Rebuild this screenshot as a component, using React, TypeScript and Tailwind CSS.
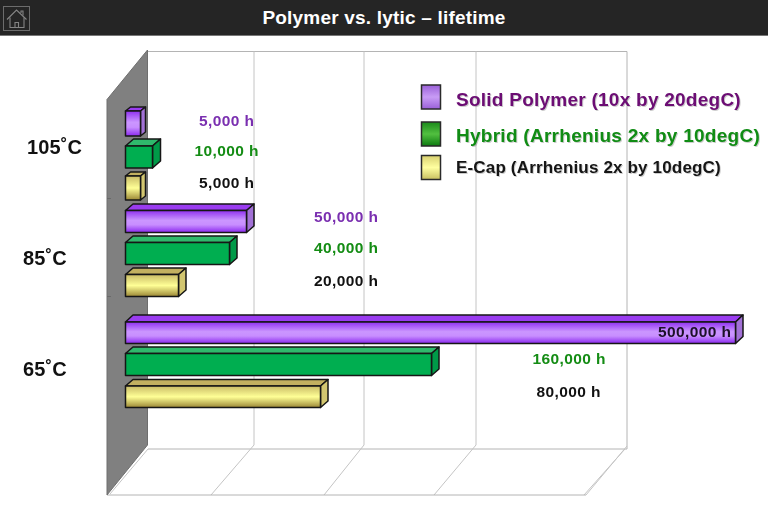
const sans = { fontFamily: '"Liberation Sans", Arial, sans-serif' };

type Bar = { x: number; y: number; w: number; h: number; dx: number; dy: number; c: "p" | "g" | "y" };

const bars: Bar[] = [
  { x: 125.5, y: 111, w: 15, h: 25, dx: 5, dy: -4, c: "p" },
  { x: 125.5, y: 146, w: 27, h: 22, dx: 8, dy: -7, c: "g" },
  { x: 125.5, y: 176, w: 15, h: 24, dx: 5, dy: -4, c: "y" },
  { x: 125.5, y: 210.5, w: 121, h: 22, dx: 7.5, dy: -6.5, c: "p" },
  { x: 125.5, y: 242.5, w: 104, h: 22, dx: 7.5, dy: -6.5, c: "g" },
  { x: 125.5, y: 274.5, w: 53, h: 22, dx: 7.5, dy: -6.5, c: "y" },
  { x: 125.5, y: 322, w: 610, h: 21.5, dx: 7.5, dy: -7, c: "p" },
  { x: 125.5, y: 353.5, w: 306, h: 22, dx: 7.5, dy: -6.5, c: "g" },
  { x: 125.5, y: 386, w: 195, h: 21.5, dx: 7.5, dy: -6.5, c: "y" },
];

const top = { p: "#9a3cf0", g: "#2fb96c", y: "#c2b060" };
const side = { p: "#a271d6", g: "#009a48", y: "#d2c670" };
const front = { p: "url(#purple)", g: "#00ae50", y: "url(#yellow)" };

const labels = [
  { t: "5,000 h", x: 199, y: 126, f: "#7a2fb0" },
  { t: "10,000 h", x: 194.5, y: 156, f: "#148c14" },
  { t: "5,000 h", x: 199, y: 188, f: "#111" },
  { t: "50,000 h", x: 314, y: 222, f: "#7a2fb0" },
  { t: "40,000 h", x: 314, y: 252.5, f: "#148c14" },
  { t: "20,000 h", x: 314, y: 285.5, f: "#111" },
  { t: "500,000 h", x: 658, y: 337, f: "#1c1028" },
  { t: "160,000 h", x: 532.5, y: 363.5, f: "#148c14" },
  { t: "80,000 h", x: 536.5, y: 396.5, f: "#111" },
];

function Bar3D({ b }: { b: Bar }) {
  const { x, y, w, h, dx, dy, c } = b;
  const r = x + w;
  const bot = y + h;
  return (
    <g stroke="#161616" strokeWidth="1.5" strokeLinejoin="round">
      <polygon fill={top[c]} points={`${x},${y} ${x + dx},${y + dy} ${r + dx},${y + dy} ${r},${y}`} />
      <polygon fill={side[c]} points={`${r},${y} ${r + dx},${y + dy} ${r + dx},${bot + dy} ${r},${bot}`} />
      <rect x={x} y={y} width={w} height={h} fill={front[c]} />
    </g>
  );
}

export default function App() {
  return (
    <div className="flex flex-col w-[768px] h-[506px] bg-white overflow-hidden" style={sans}>
      <header className="relative flex items-center justify-center h-[36px] shrink-0 bg-[#252525] border-b border-[#777]">
        <div className="absolute left-[3px] top-[6px] w-[27px] h-[25px] border border-[#6c6c6c]">
          <svg className="block" width="25" height="23" viewBox="0 0 25 23" fill="none" stroke="#858585" strokeWidth="1.1">
            <path d="M3 12.5 L12.5 3 L22.5 12.5" />
            <path d="M6 10.5 V20.5 H20 V10.5" />
            <path d="M11 20.5 V15.5 H14.5 V20.5" />
            <path d="M17 6 V4 H19 V8.5" />
          </svg>
        </div>
        <h1 className="text-[19px] font-bold text-white tracking-[0.2px] leading-none">Polymer vs. lytic – lifetime</h1>
      </header>
      <svg className="block blur-[0.35px]" width="768" height="470" viewBox="0 36 768 470">
        <defs>
          <linearGradient id="purple" x1="0" y1="0" x2="0" y2="1">
            <stop offset="0" stopColor="#9030f0" />
            <stop offset="0.45" stopColor="#cb96ff" />
            <stop offset="0.65" stopColor="#c88eff" />
            <stop offset="1" stopColor="#8a28ee" />
          </linearGradient>
          <linearGradient id="yellow" x1="0" y1="0" x2="0" y2="1">
            <stop offset="0" stopColor="#c9bb66" />
            <stop offset="0.5" stopColor="#ffff96" />
            <stop offset="1" stopColor="#9b8735" />
          </linearGradient>
          <linearGradient id="lgreen" x1="0" y1="0" x2="0" y2="1">
            <stop offset="0" stopColor="#1a8a1a" />
            <stop offset="0.5" stopColor="#52c040" />
            <stop offset="1" stopColor="#0c7a10" />
          </linearGradient>
          <linearGradient id="lpurple" x1="0" y1="0" x2="0" y2="1">
            <stop offset="0" stopColor="#9a60d8" />
            <stop offset="0.5" stopColor="#c89cf5" />
            <stop offset="1" stopColor="#9a60d8" />
          </linearGradient>
          <linearGradient id="lyellow" x1="0" y1="0" x2="0" y2="1">
            <stop offset="0" stopColor="#d8d070" />
            <stop offset="0.5" stopColor="#ffffa0" />
            <stop offset="1" stopColor="#c8c060" />
          </linearGradient>
        </defs>

        {/* back wall, floor */}
        <g fill="none" stroke="#c4c4c4" strokeWidth="1">
          <path d="M148 51.5 H627 V449 H148" stroke="#b4b4b4" />
          <path d="M254 51.5 V445 L211 495" />
          <path d="M364 51.5 V445 L324 495" />
          <path d="M476 51.5 V445 L434 495" />
          <path d="M627 446 L586 495" />
          <path d="M625 449 L584 495" />
          <path d="M107 495 H586" stroke="#b4b4b4" />
          <path d="M148 449 L110 494" />
        </g>
        {/* left wall */}
        <polygon points="107,99.5 147.5,50 147.5,445 107,495" fill="#808080" stroke="#6e6e6e" strokeWidth="1" />
        <path d="M107 198.5 H111 M107 296.5 H111" stroke="#6a6a6a" strokeWidth="1" />

        {bars.map((b, i) => (
          <Bar3D key={i} b={b} />
        ))}

        {/* category labels */}
        <g fontWeight="700" fontSize="20" fill="#111" letterSpacing="0.1">
          <text x="27" y="153.5">105˚C</text>
          <text x="23" y="265">85˚C</text>
          <text x="23" y="376">65˚C</text>
        </g>

        {/* value labels */}
        <g fontWeight="700" fontSize="15.5" letterSpacing="0.4">
          {labels.map((l, i) => (
            <text key={i} x={l.x} y={l.y} fill={l.f}>
              {l.t}
            </text>
          ))}
        </g>

        {/* legend */}
        <g stroke="#2a2a2a" strokeWidth="1.5">
          <rect x="421.5" y="85" width="19" height="24" fill="url(#lpurple)" />
          <rect x="421.5" y="122" width="19" height="24" fill="url(#lgreen)" />
          <rect x="421.5" y="155.5" width="19" height="24" fill="url(#lyellow)" />
        </g>
        <g fontWeight="700" className="drop-shadow-[1px_1px_0_rgba(0,0,0,0.2)]">
          <text x="456" y="106" fontSize="19" letterSpacing="0.25" fill="#6c0d74">Solid Polymer (10x by 20degC)</text>
          <text x="456" y="142" fontSize="19" letterSpacing="0.27" fill="#108c14">Hybrid (Arrhenius 2x by 10degC)</text>
          <text x="456" y="172.5" fontSize="17" letterSpacing="0.17" fill="#151515">E-Cap (Arrhenius 2x by 10degC)</text>
        </g>
      </svg>
    </div>
  );
}
